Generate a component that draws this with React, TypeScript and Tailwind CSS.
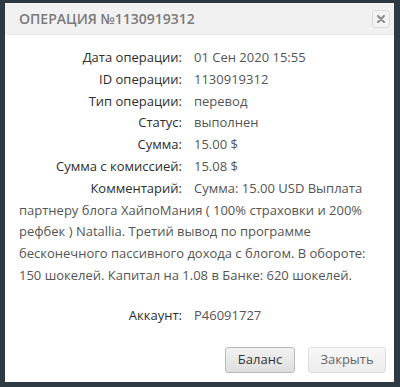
import React from "react";

const rows: [string, string][] = [
  ["Дата операции:", "01 Сен 2020 15:55"],
  ["ID операции:", "1130919312"],
  ["Тип операции:", "перевод"],
  ["Статус:", "выполнен"],
  ["Сумма:", "15.00 $"],
  ["Сумма с комиссией:", "15.08 $"],
];

export default function App() {
  return (
    <div
      className="w-[400px] h-[387px] bg-[#2e3a43] pt-[3px] pl-[5px] pr-[6px] pb-[5px]"
      style={{ fontFamily: '"Open Sans", "Liberation Sans", sans-serif' }}
    >
      <div className="h-[379px] bg-white flex flex-col">
        <div className="h-[32px] bg-[#f1f1f1] border-b border-[#e8e8e8] flex items-center justify-between pl-[14px] pr-[4px]">
          <div className="text-[14px] font-semibold text-[#7a7a7a] leading-none">
            ОПЕРАЦИЯ №1130919312
          </div>
          <div className="w-[18px] h-[18px] border border-[#dcdcdc] rounded-[3px] bg-[#f3f3f3] flex items-center justify-center">
            <svg width="8" height="8" viewBox="0 0 8 8">
              <path d="M1 1 L7 7 M7 1 L1 7" stroke="#8a8a8a" strokeWidth="2" strokeLinecap="round" />
            </svg>
          </div>
        </div>
        <div className="pt-[12px] pl-[14px] pr-[12px] text-[13px] leading-[21.8px]">
          <div className="grid grid-cols-[163px_1fr] gap-x-[12px]">
            {rows.map(([k, v]) => (
              <React.Fragment key={k}>
                <div className="text-right text-[#2e2e2e]">{k}</div>
                <div className="text-[#555]">{v}</div>
              </React.Fragment>
            ))}
          </div>
          <p className="text-[#555]">
            <span className="inline-block w-[163px] text-right text-[#2e2e2e] mr-[12px]">
              Комментарий:
            </span>
            Сумма: 15.00 USD Выплата партнеру блога ХайпоМания ( 100% страховки и 200% рефбек ) Natallia. Третий вывод по программе бесконечного пассивного дохода с блогом. В обороте: 150 шокелей. Капитал на 1.08 в Банке: 620 шокелей.
          </p>
          <div className="grid grid-cols-[163px_1fr] gap-x-[12px] mt-[18px]">
            <div className="text-right text-[#2e2e2e]">Аккаунт:</div>
            <div className="text-[#555]">P46091727</div>
          </div>
        </div>
        <div className="mt-auto flex justify-end gap-[13px] pr-[8px] pb-[9px]">
          <button className="w-[70px] h-[26px] rounded-[3px] border border-[#b9b9b9] bg-gradient-to-b from-[#f2f2f2] to-[#dedede] text-[13px] text-[#333]">
            Баланс
          </button>
          <button className="w-[78px] h-[26px] rounded-[3px] border border-[#dedede] bg-gradient-to-b from-[#f8f8f8] to-[#ececec] text-[13px] text-[#666]">
            Закрыть
          </button>
        </div>
      </div>
    </div>
  );
}
